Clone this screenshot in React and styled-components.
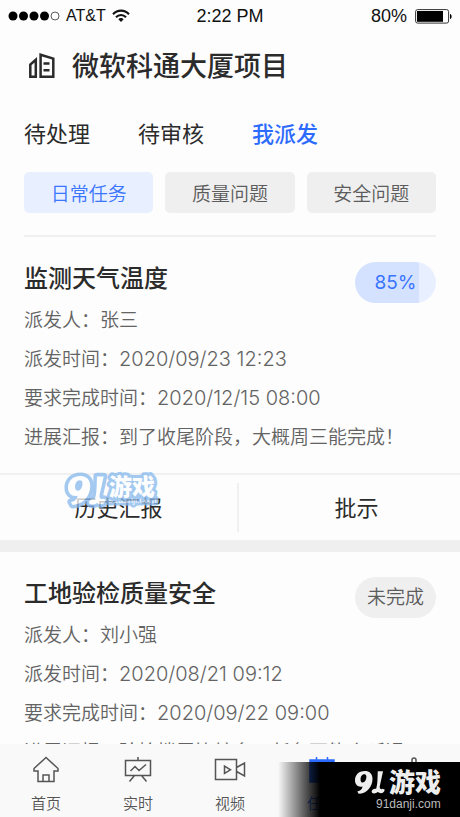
import React, { useState } from 'react';
import styled, { createGlobalStyle } from 'styled-components';

const GlobalStyle = createGlobalStyle`
  * {
    box-sizing: border-box;
  }
  body {
    margin: 0;
    background: #fdfdfd;
    color: #2b2b2b;
    font-family: Inter, "Noto Sans CJK SC", sans-serif;
  }
  h1, h2, dl, dd, dt {
    margin: 0;
  }
  button {
    font-family: inherit;
    border: 0;
    padding: 0;
    background: none;
    color: inherit;
    cursor: pointer;
  }
`;

const Screen = styled.div`
  display: flex;
  flex-direction: column;
  height: 100vh;
`;

const StatusBar = styled.div`
  display: grid;
  grid-template-columns: 1fr auto 1fr;
  align-items: center;
  height: 32px;
  padding: 0 8px;
  flex: none;
  font-family: "Liberation Sans", sans-serif;
  font-size: 18px;
  color: #111;
`;

const StatusGroup = styled.div`
  display: flex;
  align-items: center;
  gap: ${props => props.$gap};
  justify-content: ${props => (props.$end ? 'flex-end' : 'flex-start')};
`;

const Carrier = styled.span`
  font-size: 16px;
`;

const Content = styled.main`
  flex: 1;
  min-height: 0;
  overflow-y: auto;
  scrollbar-width: none;
`;

const Header = styled.header`
  display: flex;
  align-items: center;
  gap: 16px;
  height: 70px;
  padding: 0 28px;
`;

const Project = styled.h1`
  font-size: 27px;
  line-height: 36px;
  font-weight: 500;
`;

const Tabs = styled.nav`
  display: flex;
  gap: 48px;
  height: 70px;
  padding: 14px 24px 20px;
`;

const Tab = styled.button`
  font-size: 22px;
  line-height: 36px;
  font-weight: ${props => (props.$active ? 500 : 400)};
  color: ${props => (props.$active ? '#2d6bff' : '#2b2b2b')};
`;

const Filters = styled.div`
  display: grid;
  grid-template-columns: repeat(3, 1fr);
  gap: 12px;
  margin: 0 24px;
  padding-bottom: 22px;
  border-bottom: 2px solid #f0f0f0;
`;

const Filter = styled.button`
  height: 41px;
  border-radius: 5px;
  font-size: 19px;
  font-weight: 350;
  color: ${props => (props.$active ? '#3a75ff' : '#5c5c5c')};
  background: ${props => (props.$active ? '#e8f0ff' : '#efefef')};
`;

const Card = styled.article`
  border-bottom: 12px solid #efefef;
`;

const CardBody = styled.div`
  padding: 25px 24px 16px;
`;

const CardHead = styled.div`
  display: flex;
  justify-content: space-between;
  height: 39px;
`;

const CardTitle = styled.h2`
  font-size: 24px;
  line-height: 34px;
  font-weight: 500;
`;

const Badge = styled.span`
  width: 81px;
  height: 41px;
  border-radius: 21px;
  font-size: 19px;
  font-weight: ${props => (props.$blue ? 400 : 350)};
  line-height: 41px;
  text-align: center;
  color: ${props => (props.$blue ? '#3a75ff' : '#5c5c5c')};
  background: ${props => (props.$blue ? 'linear-gradient(90deg, #d5e2ff 79%, #e8f0ff 79%)' : '#efefef')};
`;

const Field = styled.div`
  display: flex;
  font-size: 19px;
  font-weight: 350;
  line-height: 39px;
  white-space: nowrap;
  color: #636363;
`;

const DateTime = styled.time`
  font-size: 20px;
`;

const Actions = styled.div`
  position: relative;
  display: grid;
  grid-template-columns: 237fr 223fr;
  padding: 8px 0;
  border-top: 2px solid #f0f0f0;
`;

const Action = styled.button`
  height: 49px;
  padding-bottom: 4px;
  font-size: 22px;
  & + & {
    padding-left: 14px;
    border-left: 2px solid #f0f0f0;
  }
`;

const Stamp = styled.svg`
  position: absolute;
  left: 62px;
  top: -6px;
  opacity: 0.75;
  pointer-events: none;
`;

const TabBar = styled.nav`
  position: relative;
  display: flex;
  flex: none;
  height: 73px;
  background: #f9f9f9;
`;

const TabLink = styled.a`
  flex: 1;
  display: flex;
  flex-direction: column;
  align-items: center;
  gap: 9px;
  padding-top: 12px;
  font-size: 15px;
  font-weight: 350;
  line-height: 22px;
  text-decoration: none;
  color: ${props => (props.$active ? '#2d6bff' : '#555')};
`;

const Brand = styled.div`
  position: absolute;
  right: 0;
  bottom: 0;
  width: 182px;
  height: 55px;
  background: linear-gradient(90deg, transparent, #000 42px);
`;

const CityIcon = () => (
  <svg width="28" height="28" viewBox="0 0 28 28" fill="none" stroke="#2b2b2b" strokeWidth="2.5">
    <path d="M2.3 23.700V11.500L7.800 6.800v16.900z" />
    <path d="M12.600 23.700V1.800L25.300 5.600v18.100z M15.500 10.500h6 M15.500 17.200h6" />
  </svg>
);

const Signal = () => (
  <svg width="52" height="10" viewBox="0 0 52 10">
    {[5, 15.5, 26, 36.5].map(x => <circle key={x} cx={x} cy="5" r="4.5" fill="#000" />)}
    <circle cx="47" cy="5" r="4" fill="none" stroke="#333" strokeWidth="0.8" />
  </svg>
);

const Wifi = () => (
  <svg width="18" height="14" viewBox="0 0 18 14" fill="none" stroke="#111" strokeWidth="2.1">
    <path d="M1 5.2C5.500 .4 12.500 .4 17 5.200" />
    <path d="M4 8.300c2.800-3 7.200-3 10 0" />
    <path d="M6.300 10.200c1.500-1.500 3.900-1.500 5.400 0L9 13z" fill="#111" stroke="none" />
  </svg>
);

const Battery = () => (
  <svg width="37" height="15" viewBox="0 0 37 15">
    <rect x="0.600" y="0.600" width="33" height="13.500" rx="2" fill="none" stroke="#333" />
    <rect x="2" y="2" width="26" height="10.800" fill="#000" />
    <path d="M35 5c2.200.6 2.200 4.400 0 5z" fill="#000" />
  </svg>
);

const ICONS = {
  home: <path d="M14 1.500 2 12.500V15h4v10.500h16V15h4v-2.500zM11 25.500V19h6v6.500" />,
  live: <path d="M14 1v3.500M1.500 4.500h25v15h-25zM10.500 19.500l-5 6M17.500 19.500l5 6M6.500 15l4.500-4.500 4 4L22 8.500" />,
  video: <path d="M-.5 3.500h21v20h-21zM20.500 11.500l8-4.500v13l-8-4.500zM8.500 10v7.500l6-3.700z" />,
  task: <path d="M2 4h24v22H2zM8.500 1v4M19.500 1v4" fill="currentColor" />,
  mine: <path d="M12 8V4a2 2 0 0 1 4 0v4M4 26c0-24 20-24 20 0z" />,
};

const NavIcon = ({ name }) => (
  <svg width="32" height="28" viewBox="-2 0 32 28" fill="none" stroke="currentColor" strokeWidth="1.500">
    {ICONS[name]}
  </svg>
);

const NAV = [
  { name: 'home', label: '首页' },
  { name: 'live', label: '实时' },
  { name: 'video', label: '视频' },
  { name: 'task', label: '任务', active: true },
  { name: 'mine', label: '我的' },
];

const TASKS = [
  {
    title: '监测天气温度',
    badge: '85%',
    blue: true,
    stamped: true,
    person: '张三',
    sent: '2020/09/23 12:23',
    due: '2020/12/15 08:00',
    report: '到了收尾阶段，大概周三能完成！',
  },
  {
    title: '工地验检质量安全',
    badge: '未完成',
    person: '刘小强',
    sent: '2020/08/21 09:12',
    due: '2020/09/22 09:00',
    report: '验检楼层比较多，任务可能会延误',
  },
];

// emblem on a 90 x 70 grid
const Emblem = () => (
  <>
    <path
      d="M30 0C10 0 0 13 0 28c0 14 10 22 23 19-2 9-6 13-16 15l4 7c26-1 42-23 42-45C53 8 43 0 30 0zM28 10c7 0 8 8 5 16-3 10-15 13-16 2-1-10 4-18 11-18z"
      fillRule="evenodd"
    />
    <path d="M69 1h16L75 46c-2 8 6 11 8 8l7 2c-1 12-13 14-21 8-8 7-22 4-18-4 3-6 10-6 13-6 5-13 4-33 5-53z" />
  </>
);

const TaskCard = ({ task }) => (
  <Card>
    <CardBody>
      <CardHead>
        <CardTitle>{task.title}</CardTitle>
        <Badge $blue={task.blue}>{task.badge}</Badge>
      </CardHead>
      <dl>
        <Field>
          <dt>派发人：</dt>
          <dd>{task.person}</dd>
        </Field>
        <Field>
          <dt>派发时间：</dt>
          <dd><DateTime>{task.sent}</DateTime></dd>
        </Field>
        <Field>
          <dt>要求完成时间：</dt>
          <dd><DateTime>{task.due}</DateTime></dd>
        </Field>
        <Field>
          <dt>进展汇报：</dt>
          <dd>{task.report}</dd>
        </Field>
      </dl>
    </CardBody>
    <Actions>
      <Action>历史汇报</Action>
      <Action>批示</Action>
      {task.stamped && (
        <Stamp width="98" height="42" viewBox="0 0 98 42" fill="#fff" stroke="#86b8ee" strokeLinejoin="round">
          <g transform="translate(6 7) scale(0.42)" strokeWidth="17" style={{ paintOrder: 'stroke' }}>
            <Emblem />
          </g>
          <g style={{ paintOrder: 'stroke' }} fontFamily="Noto Sans CJK SC">
            <text x="46" y="34" fontSize="9" strokeWidth="5" fontFamily="Liberation Sans">91danji.com</text>
            <text x="47" y="26" fontSize="23" fontWeight="900" strokeWidth="6">游戏</text>
          </g>
        </Stamp>
      )}
    </Actions>
  </Card>
);

const App = () => {
  const [tab, setTab] = useState('我派发');
  const [filter, setFilter] = useState('日常任务');

  return (
    <Screen>
      <GlobalStyle />
      <StatusBar>
        <StatusGroup $gap="6px">
          <Signal />
          <Carrier>AT&amp;T</Carrier>
          <Wifi />
        </StatusGroup>
        <span>2:22 PM</span>
        <StatusGroup $gap="8px" $end>
          <span>80%</span>
          <Battery />
        </StatusGroup>
      </StatusBar>
      <Content>
        <Header>
          <CityIcon />
          <Project>微软科通大厦项目</Project>
        </Header>
        <Tabs>
          {['待处理', '待审核', '我派发'].map(name => (
            <Tab key={name} $active={tab === name} onClick={() => setTab(name)}>{name}</Tab>
          ))}
        </Tabs>
        <Filters>
          {['日常任务', '质量问题', '安全问题'].map(name => (
            <Filter key={name} $active={filter === name} onClick={() => setFilter(name)}>{name}</Filter>
          ))}
        </Filters>
        {TASKS.map(task => <TaskCard key={task.title} task={task} />)}
      </Content>
      <TabBar>
        {NAV.map(item => (
          <TabLink key={item.name} href="#" $active={item.active}>
            <NavIcon name={item.name} />
            {item.label}
          </TabLink>
        ))}
        <Brand>
          <svg width="182" height="55" viewBox="0 0 182 55" fill="#eee">
            <g transform="translate(77 9) scale(0.33)">
              <Emblem />
            </g>
            <text x="111" y="30" fontSize="26" fontWeight="900" fontFamily="Noto Sans CJK SC">游戏</text>
            <text x="98" y="46" fontSize="12" fill="#bbb" fontFamily="Liberation Sans">91danji.com</text>
          </svg>
        </Brand>
      </TabBar>
    </Screen>
  );
};

export default App;
